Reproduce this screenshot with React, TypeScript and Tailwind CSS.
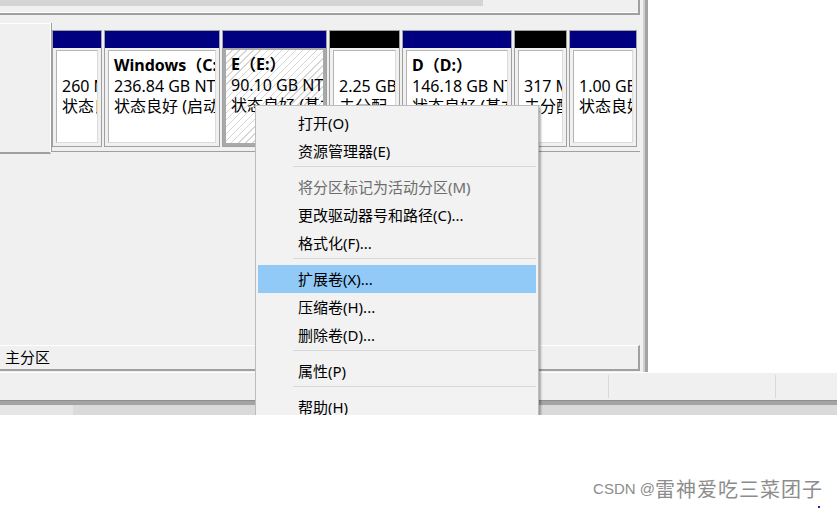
import React from "react";

type Part = {
  w: string;
  head: string;
  l1: string;
  l2: string;
  l3: string;
  sel?: boolean;
};

const parts: Part[] = [
  { w: "w-[50px]", head: "bg-[#000080]", l1: "", l2: "260 MB", l3: "状态良好 (EFI 系统分区)" },
  { w: "w-[116px]", head: "bg-[#000080]", l1: "Windows（C:）", l2: "236.84 GB NTFS", l3: "状态良好 (启动, 页面文件, 故障转储, 基本数据分区)" },
  { w: "w-[105px]", head: "bg-[#000080]", l1: "E（E:）", l2: "90.10 GB NTFS", l3: "状态良好 (基本数据分区)", sel: true },
  { w: "w-[71px]", head: "bg-black", l1: "", l2: "2.25 GB", l3: "未分配" },
  { w: "w-[110px]", head: "bg-[#000080]", l1: "D（D:）", l2: "146.18 GB NTFS", l3: "状态良好 (基本数据分区)" },
  { w: "w-[53px]", head: "bg-black", l1: "", l2: "317 MB", l3: "未分配" },
  { w: "w-[68px]", head: "bg-[#000080]", l1: "", l2: "1.00 GB", l3: "状态良好 (恢复分区)" },
];

function PartText({ p }: { p: Part }) {
  return (
    <div className="pt-[4px] pl-[5px] leading-[20.5px] text-[16px] text-black whitespace-nowrap overflow-hidden">
      <div className="font-bold h-[20.5px]">{p.l1}</div>
      <div>{p.l2}</div>
      <div>{p.l3}</div>
    </div>
  );
}

function Partition({ p }: { p: Part }) {
  return (
    <div className={`${p.w} h-[117px] shrink-0 flex flex-col border border-[#a0a0a0] bg-[#f0f0f0]`}>
      <div className={`h-[17px] shrink-0 ${p.head}`} />
      {p.sel ? (
        <div className="flex-1 min-h-0 border-[3px] border-t-2 border-[#a9a9a9] bg-[repeating-linear-gradient(135deg,#ffffff_0px,#ffffff_4px,#d6d6d6_4px,#d6d6d6_5px)] overflow-hidden">
          <PartText p={p} />
        </div>
      ) : (
        <div className="flex-1 min-h-0 pt-[2px] px-[3px] pb-[3px] flex">
          <div className="flex-1 min-w-0 bg-white border border-t-[#b4b4b4] border-l-[#b4b4b4] border-r-[#dcdcdc] border-b-[#dcdcdc] overflow-hidden">
            <PartText p={p} />
          </div>
        </div>
      )}
    </div>
  );
}

function MenuItem({ label, disabled, hi }: { label: string; disabled?: boolean; hi?: boolean }) {
  return (
    <div
      className={`h-[28px] flex items-center pl-[40px] text-[15px] whitespace-nowrap ${
        hi ? "bg-[#91c9f7]" : ""
      } ${disabled ? "text-[#6d6d6d]" : "text-black"}`}
    >
      {label}
    </div>
  );
}

function Sep() {
  return (
    <div className="h-[8px] pt-[1px]">
      <div className="h-px ml-[35px] bg-[#d7d7d7]" />
    </div>
  );
}

export default function App() {
  return (
    <div className="w-[837px] h-[508px] bg-white font-['Noto_Sans','Noto_Sans_CJK_SC',sans-serif] flex flex-col overflow-hidden">
      {/* screenshot */}
      <div className="relative h-[415px] shrink-0 overflow-hidden flex flex-col">
        <div className="h-[372px] shrink-0 flex">
          {/* main left area */}
          <div className="w-[640px] shrink-0 bg-[#f0f0f0] flex flex-col">
            {/* list view bottom with scrollbar */}
            <div className="h-[15px] shrink-0 border-r-2 border-b-2 border-[#a0a0a0] flex flex-col">
              <div className="h-[6px] flex">
                <div className="w-[483px] bg-[#d4d4d4]" />
              </div>
              <div className="flex-1 border-b border-white" />
            </div>
            <div className="h-[8px] shrink-0" />
            {/* disk row */}
            <div className="h-[131px] shrink-0 flex">
              <div className="w-[51px] shrink-0 h-[131px] border-t border-r border-white border-b-2 border-b-[#a0a0a0] bg-[#f0f0f0]" />
              <div className="flex-1 h-[129px] border-l border-[#a0a0a0] border-b pt-[7px] pl-0 flex gap-[2px]">
                {parts.map((p, i) => (
                  <Partition key={i} p={p} />
                ))}
              </div>
            </div>
            <div className="flex-1" />
            {/* legend row */}
            <div className="h-[26px] shrink-0 border-t border-white border-b-2 border-b-[#a0a0a0] border-r-2 border-r-[#a0a0a0] flex items-center pl-[5px] text-[15px] text-black">
              主分区
            </div>
            <div className="h-px shrink-0" />
          </div>
          {/* divider */}
          <div className="w-[3px] shrink-0 bg-[#f0f0f0]" />
          <div className="w-[2px] shrink-0 bg-[#d0d0d0]" />
          <div className="w-[3px] shrink-0 bg-[#a3a3a3]" />
          <div className="flex-1 bg-white" />
        </div>
        {/* status bar */}
        <div className="h-[28px] shrink-0 border-t border-white bg-[#f0f0f0] flex">
          <div className="w-[608px] shrink-0" />
          <div className="w-[167px] shrink-0 border-l border-[#d9d9d9] my-[2px]" />
          <div className="flex-1 border-l border-[#d9d9d9] my-[2px]" />
        </div>
        <div className="h-[5px] shrink-0 bg-[#a4a4a4] border-t border-[#8f8f8f]" />
        <div className="flex-1 bg-[#dadada] flex">
          <div className="w-[73px] bg-[#e6e6e6]" />
        </div>

        {/* context menu */}
        <div className="absolute left-[255px] top-[105px] w-[284px] h-[330px] bg-[#f2f2f2] border border-[#bcbcbc] shadow-[2px_2px_2px_rgba(0,0,0,0.3)] pt-[3px] px-[2px]">
          <MenuItem label="打开(O)" />
          <MenuItem label="资源管理器(E)" />
          <Sep />
          <MenuItem label="将分区标记为活动分区(M)" disabled />
          <MenuItem label="更改驱动器号和路径(C)..." />
          <MenuItem label="格式化(F)..." />
          <Sep />
          <MenuItem label="扩展卷(X)..." hi />
          <MenuItem label="压缩卷(H)..." />
          <MenuItem label="删除卷(D)..." />
          <Sep />
          <MenuItem label="属性(P)" />
          <Sep />
          <MenuItem label="帮助(H)" />
        </div>
      </div>

      {/* watermark */}
      <div className="flex-1 relative">
        <div className="absolute right-[14px] top-[63px] text-[#8c8c8c] whitespace-nowrap flex items-center leading-[22px]">
          <span className="font-['Liberation_Sans',sans-serif] text-[15px]">CSDN @</span>
          <span className="font-['Noto_Sans_CJK_SC',sans-serif] text-[20px] tracking-[1px]">雷神爱吃三菜团子</span>
        </div>
        <div className="absolute left-[818px] top-[91px] w-[2px] h-[2px] bg-[#2020c0]" />
      </div>
    </div>
  );
}
